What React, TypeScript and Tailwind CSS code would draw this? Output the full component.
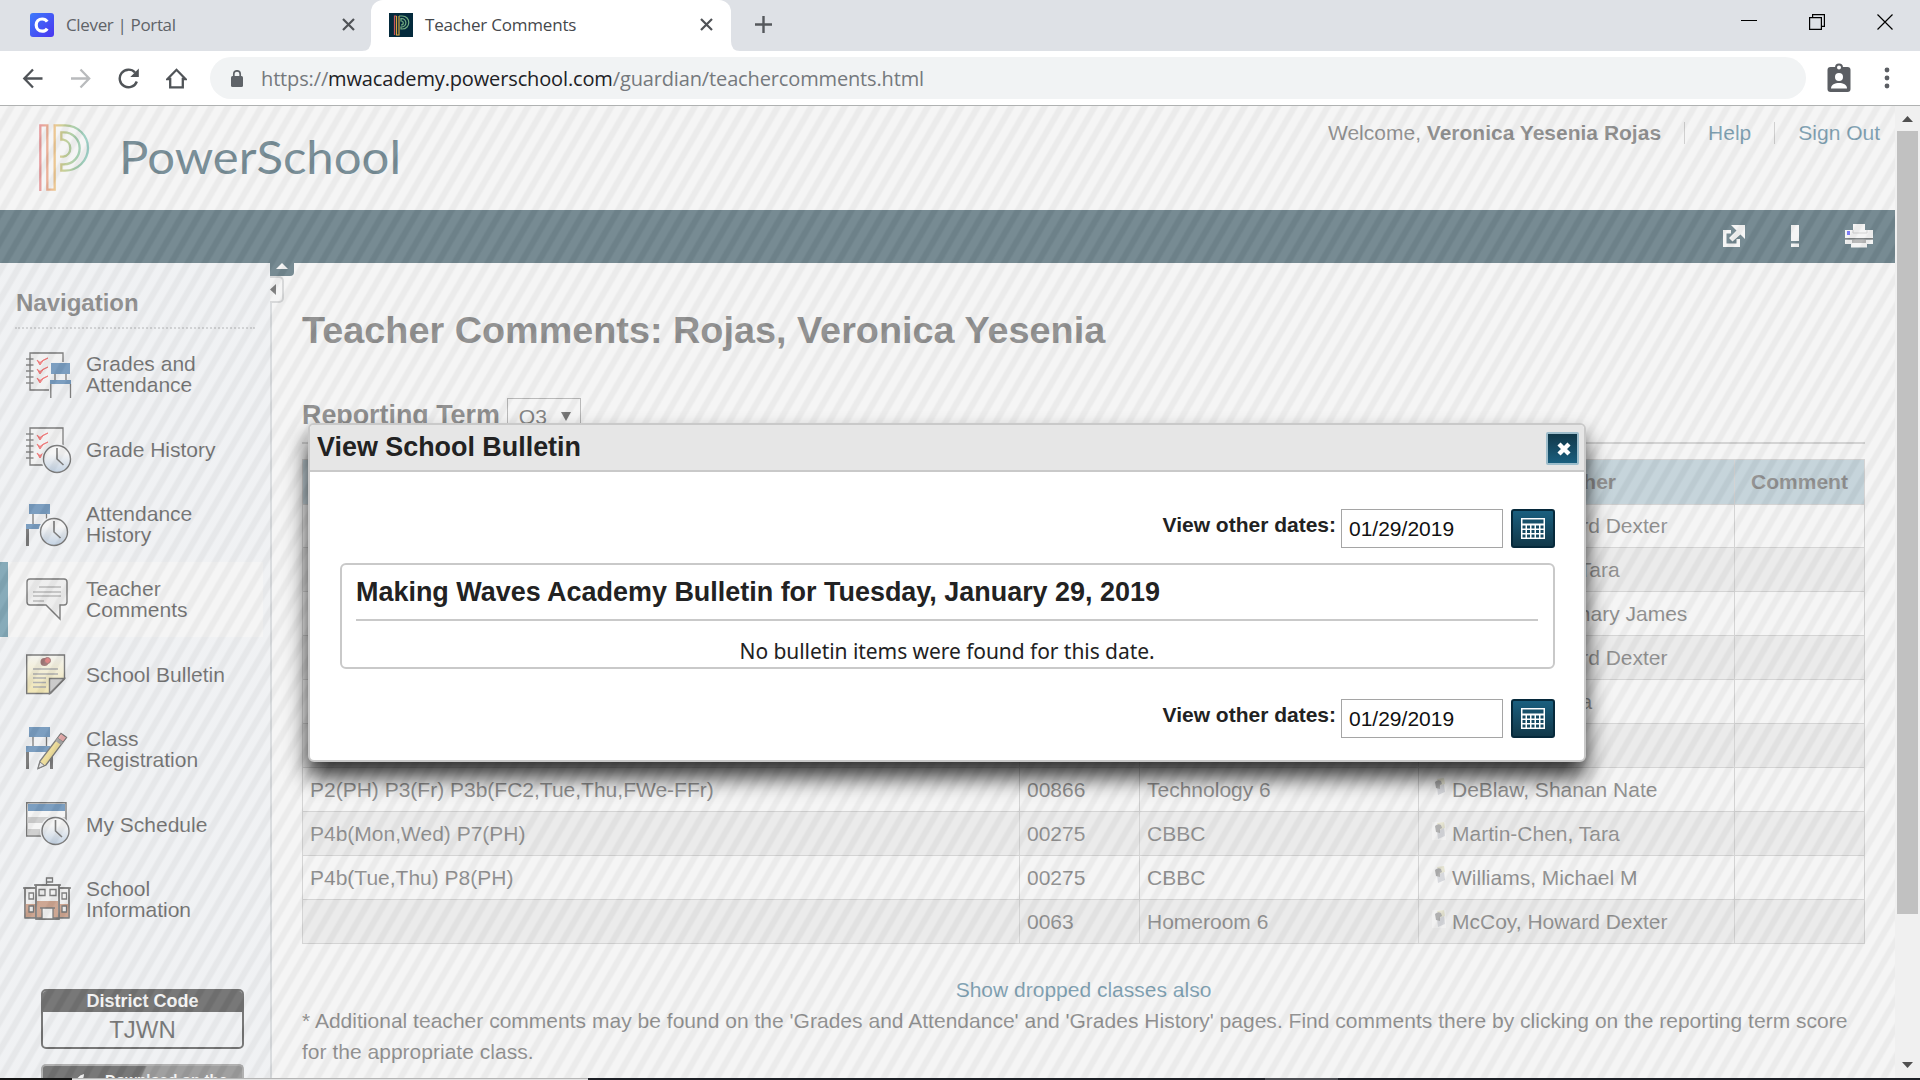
import React from "react";

const ARIAL = "font-['Liberation_Sans',Arial,sans-serif]";
const SEGOE = "font-['Open_Sans','Noto_Sans',sans-serif]";

function TabStrip() {
  return (
    <div className={`${SEGOE} flex h-[51px] bg-[#dee1e6] text-[17px] tracking-[-0.2px]`}>
      <div className="flex w-[371px] items-center pl-[30px] pr-[16px] pb-[2px]">
        <svg width="24" height="24" viewBox="0 0 24 24">
          <defs>
            <linearGradient id="cl" x1="0" y1="0" x2="1" y2="1">
              <stop offset="0" stopColor="#3d7bfb" />
              <stop offset="1" stopColor="#4a35f0" />
            </linearGradient>
          </defs>
          <rect width="24" height="24" rx="3" fill="url(#cl)" />
          <path d="M17.2 8.6C16.2 7 14.4 6 12.2 6c-3.500 0-6 2.500-6 6.100s2.500 6.100 6 6.100c2.200 0 4-1 5-2.600" fill="none" stroke="#fff" strokeWidth="3.200" />
        </svg>
        <span className="ml-3 flex-1 whitespace-nowrap tracking-[-0.35px] text-[#5f6368]">Clever | Portal</span>
        <CloseX />
      </div>
      <div className="relative flex w-[360px] items-center rounded-t-[12px] bg-white pl-[18px] pr-[18px] pb-[2px]">
        <svg className="absolute -left-[9px] bottom-0" width="9" height="10" viewBox="0 0 9 10"><path d="M9 0V10H0Q9 10 9 0z" fill="#fff" /></svg>
        <svg className="absolute -right-[9px] bottom-0" width="9" height="10" viewBox="0 0 9 10"><path d="M0 0V10H9Q0 10 0 0z" fill="#fff" /></svg>
        <svg width="24" height="24" viewBox="0 0 24 24">
          <rect width="24" height="24" fill="#042a3c" />
          <path d="M5.500 22V3H7.500" fill="none" stroke="#c9565b" strokeWidth="1.200" />
          <path d="M7.500 3V22H10V3" fill="none" stroke="#d9a441" strokeWidth="1.200" />
          <path d="M10 3H13C22 3 22 16 13 16H12V14C19 14 18 5 12 5.500V8C15 8 15 12 12 12" fill="none" stroke="#73ad82" strokeWidth="1.200" />
        </svg>
        <span className="ml-3 flex-1 whitespace-nowrap text-[#45484c]">Teacher Comments</span>
        <CloseX />
      </div>
      <div className="flex flex-1 items-center pl-[24px] pb-[2px]">
        <svg width="17" height="17" viewBox="0 0 17 17">
          <path d="M8.500 0V17M0 8.500H17" stroke="#55585c" strokeWidth="2.400" />
        </svg>
      </div>
      <div className="flex h-[43px] items-center gap-[52px] pr-[27px]">
        <svg width="16" height="16" viewBox="0 0 16 16"><path d="M0 6.500H16" stroke="#000" strokeWidth="1" /></svg>
        <svg width="16" height="16" viewBox="0 0 16 16" fill="none" stroke="#000" strokeWidth="1.200">
          <path d="M.6 3.600H12.400V15.400H.6zM3.600 3.600V.6H15.400V12.400H12.400" />
        </svg>
        <svg width="16" height="16" viewBox="0 0 16 16"><path d="M.5.5L15.500 15.500M15.500.5L.5 15.500" stroke="#000" strokeWidth="1.200" /></svg>
      </div>
    </div>
  );
}

function CloseX() {
  return (
    <svg width="13" height="13" viewBox="0 0 13 13">
      <path d="M1 1L12 12M12 1L1 12" stroke="#505357" strokeWidth="2.200" />
    </svg>
  );
}

function Toolbar() {
  return (
    <div className={`${SEGOE} flex h-[55px] items-center border-b border-[#b0b2b2] bg-white pl-[22px]`}>
      <div className="flex items-center gap-[27px]">
        <svg width="21" height="21" viewBox="0 0 21 21" fill="none" stroke="#505458" strokeWidth="2.300"><path d="M20.500 10.500H3M11 1.500L2.300 10.500L11 19.500" /></svg>
        <svg width="21" height="21" viewBox="0 0 21 21" fill="none" stroke="#b9bbbd" strokeWidth="2.300"><path d="M1 10.500H19M10.500 1.500L19.200 10.500L10.500 19.500" /></svg>
        <svg width="21" height="21" viewBox="0 0 21 21">
          <path d="M18.800 13.500A8.800 8.800 0 1 1 17 4.500" fill="none" stroke="#505458" strokeWidth="2.400" />
          <path d="M20.800 0.500V9H12.300z" fill="#505458" />
        </svg>
        <svg width="21" height="21" viewBox="0 0 21 21" fill="none" stroke="#505458" strokeWidth="2.300"><path d="M1.500 11L10.500 1.800L19.500 11H16.800V19.300H4.200V11z" /></svg>
      </div>
      <div className="ml-[23px] flex h-[42px] w-[1596px] items-center rounded-full bg-[#f1f3f4] pl-[21px]">
        <svg width="12" height="17" viewBox="0 0 12 17">
          <rect y="6" width="12" height="11" rx="1.500" fill="#5f6368" />
          <path d="M2.800 7V4a3.200 3.200 0 0 1 6.400 0V7" fill="none" stroke="#5f6368" strokeWidth="1.700" />
        </svg>
        <span className="ml-[18px] whitespace-nowrap pt-px text-[20px] tracking-[-0.14px] text-[#75797d]">
          https://<span className="text-[#202124]">mwacademy.powerschool.com</span>/guardian/teachercomments.html
        </span>
      </div>
      <svg className="ml-[21px]" width="24" height="30" viewBox="0 0 24 30">
        <rect x="0.500" y="4" width="23" height="25" rx="3" fill="#5b5e63" />
        <circle cx="12" cy="4.500" r="3" fill="#fff" stroke="#5b5e63" strokeWidth="2" />
        <circle cx="12" cy="14" r="4" fill="#fff" />
        <path d="M4 25.500c0-4 4-5.500 8-5.500s8 1.500 8 5.500z" fill="#fff" />
      </svg>
      <svg className="ml-[33px]" width="6" height="22" viewBox="0 0 6 22" fill="#5b5e63">
        <circle cx="3" cy="3" r="2.400" /><circle cx="3" cy="11" r="2.400" /><circle cx="3" cy="19" r="2.400" />
      </svg>
    </div>
  );
}

function Header() {
  return (
    <div className="flex h-[104px] justify-between bg-white">
      <svg width="420" height="104" viewBox="0 0 420 104">
        <linearGradient id="pg" x1="57" y1="0" x2="208" y2="0" gradientUnits="userSpaceOnUse">
          <stop offset="0" stopColor="#e04a55" /><stop offset=".17" stopColor="#ec7a48" />
          <stop offset=".32" stopColor="#eda63a" /><stop offset=".48" stopColor="#a8b545" />
          <stop offset=".75" stopColor="#62b276" /><stop offset="1" stopColor="#52b7ae" />
        </linearGradient>
        <path
          transform="translate(20 -2) scale(.3333)"
          d="M61 261V64H82V257H104V64H135A69 68 0 0 1 135 200H124V181H132A47 48 0 0 0 132 85H124V107H130A26 26 0 0 1 130 158H120"
          fill="none" stroke="url(#pg)" strokeWidth="7"
        />
        <text x="119" y="67.500" textLength="282" lengthAdjust="spacingAndGlyphs" fontFamily="Lato, sans-serif" fontSize="46" fill="#0b3648">PowerSchool</text>
      </svg>
      <div className="flex h-[54px] items-center pr-[15px] text-[21px] text-[#3c3c3c]">
        <span>Welcome, <b>Veronica Yesenia Rojas</b></span>
        <span className="ml-[23px] mr-[23px] h-[22px] w-px bg-[#b5b5b5]" />
        <span className="text-[#195d7f]">Help</span>
        <span className="ml-[23px] mr-[23px] h-[22px] w-px bg-[#b5b5b5]" />
        <span className="text-[#195d7f]">Sign Out</span>
      </div>
    </div>
  );
}

function DarkBar() {
  return (
    <div className="flex h-[53px] items-center justify-end gap-[46px] bg-[#032b3b] pb-[2px] pr-[22px]">
      <svg width="22" height="22" viewBox="0 0 22 22" fill="#fff">
        <path d="M8 5H0V22H17V14H13.500V18.500H3.500V8.500H8z" />
        <path d="M8 0H22V14L17.500 9.500L9.500 16.500L6 13L13.500 5.500z" />
      </svg>
      <svg width="8" height="22" viewBox="0 0 8 22" fill="#fff"><path d="M0 0H8V16H0zM0 18.500H8V22H0z" /></svg>
      <svg width="28" height="24" viewBox="0 0 28 24">
        <path d="M8 0H20V6H28V14H0V6H8z" fill="#fff" />
        <path d="M8 6V9H22V6" fill="none" stroke="#bbb" />
        <rect x="2" y="7" width="3" height="4" fill="#1010ff" />
        <path d="M0 15.500H28V20H22V23.500H6V20H0z" fill="#fff" />
        <path d="M7 15.500H21V19H7z" fill="#888" /><path d="M0 14.800H28" stroke="#222" strokeWidth="1.200" />
      </svg>
    </div>
  );
}

const INK = "#111";
const Clock = ({ x, y }: { x: number; y: number }) => (
  <g transform={`translate(${x} ${y})`}>
    <circle r="15.500" fill="#f5f8fc" />
    <circle r="13.500" fill="url(#clk)" stroke={INK} strokeWidth="1.400" />
    <path d="M0-11V0L6.500 6" fill="none" stroke={INK} strokeWidth="1.600" />
  </g>
);
const Notebook = () => (
  <g>
    <path d="M4 1H37V38H4z" fill="#f8f8f8" stroke={INK} strokeWidth="1.300" />
    {[7, 13, 19, 25, 31].map((y) => <path key={y} d={`M0 ${y}H7.500`} stroke={INK} strokeWidth="1.300" />)}
    {[8, 17, 26].map((y) => <path key={y} d={`M11 ${y}l3 5q2-5 8-7q-5 1.500-8 4.500z`} fill="#f01010" stroke="#f01010" />)}
  </g>
);

const icons: Record<string, React.ReactNode> = {
  grades: (
    <>
      <Notebook />
      <path d="M23 10H46V28H48V48H23z" fill="#f2f5f9" />
      <path d="M25 11H44V22H25z" fill="#0d5296" />
      <path d="M24 28H45V32H24z" fill="#0d5296" />
      <path d="M29 22V28M40 22V28M24.800 32V46M44.500 32V46" stroke={INK} strokeWidth="1.300" />
    </>
  ),
  history: (<><Notebook /><Clock x={31} y={32} /></>),
  attendance: (
    <>
      <path d="M3 2H24V12H3zM0 22H20V27H0z" fill="#0d5296" />
      <path d="M7 12V22M20.500 12V22" stroke={INK} strokeWidth="1.300" /><path d="M0 27H3V44H0z" fill={INK} />
      <Clock x={28} y={30} />
    </>
  ),
  comments: (
    <>
      <path d="M4 2H38Q41 2 41 5V25Q41 28 38 28H34V42L20 28H4Q1 28 1 25V5Q1 2 4 2z" fill="#f2f2f2" stroke={INK} strokeWidth="1.400" />
      <path d="M13 10H35M7 15H35M7 19H35M7 24H18" stroke="#888" strokeWidth="1.300" />
    </>
  ),
  bulletin: (
    <>
      <path d="M.7 3H38.500V27L24.500 41.500H.7z" fill="url(#note)" stroke={INK} strokeWidth="1.400" />
      <path d="M38.500 26.500H23.500V41.500z" fill="#aaa" stroke={INK} strokeWidth="1.400" />
      <path d="M7 17H32M7 22H32M7 26H20M7 30.500H20M7 35H20" stroke="#777" strokeWidth="1.300" />
      <circle cx="18.500" cy="10" r="4" fill="#5a0f0f" /><circle cx="21.500" cy="8.500" r="3" fill="#d02020" stroke="#5a0f0f" />
    </>
  ),
  registration: (
    <>
      <path d="M3 0H24V10H3zM0 19H24V25H0z" fill="#0d5296" />
      <path d="M7 10V19M20.500 10V19" stroke={INK} strokeWidth="1.300" /><path d="M0 25H3V42H0zM24 25H27V42H24z" fill={INK} />
      <path d="M12 41.500L14 34L35 6.500L40.500 10.500L20 38z" fill="#f0d050" stroke={INK} strokeWidth="1.300" />
      <path d="M35 6.500L40.500 10.500L37 15L31.500 11z" fill="#e07070" stroke={INK} strokeWidth="1" />
      <path d="M30.500 12.500L36 16.500" stroke="#666" strokeWidth="3.500" /><path d="M12 41.500L14 35L18.500 38.500z" fill="#ddd" stroke={INK} />
    </>
  ),
  schedule: (
    <>
      <path d="M.7 .7H40V34H.7z" fill="#fff" stroke={INK} strokeWidth="1.400" />
      <path d="M2 2H39V9H2z" fill="#0d5296" />
      <path d="M2 15H39V21H2zM2 27H39V33H2z" fill="#b5b5b5" />
      <Clock x={29.500} y={29} />
    </>
  ),
  school: (
    <g stroke={INK} strokeWidth="1.300">
      <path d="M-1 11H11V40H-1zM33 11H43V40H33z" fill="#f2f2f2" />
      <path d="M-1 27H43V40H-1z" fill="#b0633c" stroke="none" />
      <path d="M10 8H33V42H10z" fill="#f4f4f4" /><path d="M11 24H32V41H11z" fill="#b0633c" stroke="none" />
      <path d="M-1 11V41H43V11M-3 11H9M33 11H45M8 8H35M10 8V42H33V8M20.500 8V1H26.500V5H20.500" fill="none" />
      <path d="M3 16H7.500V22H3zM3 29H7.500V35H3zM36 16H40.500V22H36zM36 29H40.500V35H36zM13 12.500H19V18.500H13zM24 12.500H30V18.500H24zM16 31H27V42H16zM14 31H29" fill="#f8f8f8" />
    </g>
  ),
};

const nav = [
  { icon: "grades", lines: ["Grades and", "Attendance"] },
  { icon: "history", lines: ["Grade History"] },
  { icon: "attendance", lines: ["Attendance", "History"] },
  { icon: "comments", lines: ["Teacher", "Comments"], active: true },
  { icon: "bulletin", lines: ["School Bulletin"] },
  { icon: "registration", lines: ["Class", "Registration"] },
  { icon: "schedule", lines: ["My Schedule"] },
  { icon: "school", lines: ["School", "Information"] },
];

function Sidebar() {
  return (
    <div className="relative w-[272px] shrink-0 border-r-2 border-[#c8cdd2] bg-[#f5f8fc]">
      <svg width="0" height="0" className="absolute">
        <defs>
          <linearGradient id="clk" x1="0" y1="0" x2="0" y2="1"><stop offset=".3" stopColor="#fff" /><stop offset="1" stopColor="#9dbbdc" /></linearGradient>
          <linearGradient id="note" x1="0" y1="0" x2="0" y2="1"><stop offset="0" stopColor="#fdfdf4" /><stop offset="1" stopColor="#f6df7c" /></linearGradient>
        </defs>
      </svg>
      <div className="ml-[15px] mr-[15px] h-[66px] border-b-2 border-dotted border-[#b9bcc0] pl-px pt-[24px] text-[24px] font-bold leading-8 text-[#3c3c3c]">
        Navigation
      </div>
      <div className="pt-2">
        {nav.map((n) => (
          <div key={n.icon} className={n.active ? "mr-[7px] flex h-[75px] items-center border-l-8 border-[#236b88] bg-white pl-[18px]" : "flex h-[75px] items-center pl-[26px]"}>
            <svg width="46" height="46" viewBox="0 0 46 46" className="mt-px shrink-0 overflow-visible">{icons[n.icon]}</svg>
            <div className="ml-[14px] whitespace-nowrap pb-px text-[21px] leading-[21px] text-[#050505]">
              {n.lines.map((l) => <div key={l}>{l}</div>)}
            </div>
          </div>
        ))}
      </div>
      <div className="ml-[41px] mt-[52px] h-[60px] w-[203px] overflow-hidden rounded-[5px] border-2 border-[#050505] text-center">
        <div className="h-[21px] bg-[#050505] text-[18px] font-bold leading-[20px] text-white">District Code</div>
        <div className="text-[24px] leading-[36px] text-[#111]">TJWN</div>
      </div>
      <div className="ml-[41px] mt-[15px] flex h-[14px] w-[203px] overflow-hidden rounded-t-[5px] border-2 border-b-0 border-[#777] bg-linear-[115deg,#050505_50%,#555_51%] pl-[30px] pt-[6px]">
        <svg className="mt-[2px] shrink-0" width="14" height="8" viewBox="0 0 14 8"><path d="M3 8Q4 2 11 0Q11 6 6 8z" fill="#fff" /></svg>
        <div className="ml-[18px] whitespace-nowrap text-[15px] font-bold leading-4 tracking-[0.1px] text-white">Download on the</div>
      </div>
      <div className="absolute left-[270px] top-0 flex h-[13px] w-[24px] justify-center rounded-br-[4px] bg-[#032b3b]">
        <svg width="12" height="6" viewBox="0 0 12 6"><path d="M6 0L12 6H0z" fill="#fff" /></svg>
      </div>
      <div className="absolute left-[270px] top-[13px] flex h-[27px] w-[14px] items-center rounded-r-[5px] border-2 border-l-0 border-[#c4c6c8] bg-white">
        <svg width="7" height="11" viewBox="0 0 7 11"><path d="M0 5.500L6 0V11z" fill="#222" /></svg>
      </div>
    </div>
  );
}

const rows = [
  ["", "", "", "McCoy, Howard Dexter"],
  ["", "", "", "Martin-Chen, Tara"],
  ["", "", "", "Connolly, Zachary James"],
  ["", "", "", "McCoy, Howard Dexter"],
  ["", "", "", "Cohen, Andrea"],
  ["", "", "", ""],
  ["P2(PH) P3(Fr) P3b(FC2,Tue,Thu,FWe-FFr)", "00866", "Technology 6", "DeBlaw, Shanan Nate"],
  ["P4b(Mon,Wed) P7(PH)", "00275", "CBBC", "Martin-Chen, Tara"],
  ["P4b(Tue,Thu) P8(PH)", "00275", "CBBC", "Williams, Michael M"],
  ["", "0063", "Homeroom 6", "McCoy, Howard Dexter"],
];

const GRID = "grid grid-cols-[717px_120px_279px_316px_130px]";

function PersonIcon() {
  return (
    <svg className="mr-[6px] mt-[-8px] inline-block" width="14" height="18" viewBox="0 0 14 18">
      <rect width="14" height="18" fill="#fff" fillOpacity=".6" />
      <path d="M5 1l7-1 1 6-5 2z" fill="#e0ddb8" />
      <path d="M5 9l7-3 1 8-7 3z" fill="#c3c6ce" />
      <path d="M3 4q3-3 6-1l1 3-2 1v4l-4-1z" fill="#777" />
    </svg>
  );
}

function Main() {
  return (
    <div className="w-[1593px] shrink-0 bg-white pl-[30px] text-[#3c3c3c]">
      <h1 className="whitespace-nowrap pt-[44px] text-[37.8px] font-bold leading-[46px]">Teacher Comments: Rojas, Veronica Yesenia</h1>
      <div className="mt-[45px] flex h-[46px] w-[1563px] items-start border-b-2 border-[#bbb] text-[26.850px] font-bold leading-[34px]">
        <span className="whitespace-nowrap">Reporting Term</span>
        <div className="ml-[7px] flex h-[36px] w-[74px] items-center justify-between border border-[#888] pl-[11px] pr-[9px] pt-px text-[21px] font-normal text-[#222]">
          Q3
          <svg width="10" height="9" viewBox="0 0 10 9"><path d="M0 0H10L5 9z" fill="#111" /></svg>
        </div>
      </div>
      <div className="mt-[15px] w-[1563px] border-l border-t border-[#bdbdbd] text-[21px]">
        <div className={`${GRID} h-[44px] bg-[#a1becb] text-center font-bold leading-[44px]`}>
          {["", "", "", "Teacher", "Comment"].map((h, i) => (
            <div key={i} className="border-b border-r border-[#bdbdbd]">{h}</div>
          ))}
        </div>
        {rows.map((r, i) => (
          <div key={i} className={i % 2 ? `${GRID} h-[44px] bg-[#ebebeb]` : `${GRID} h-[44px]`}>
            {[...r, ""].map((c, j) => (
              <div key={j} className={j === 3 ? "h-[44px] whitespace-nowrap border-b border-r border-[#bdbdbd] pl-[13px] leading-[44px]" : "h-[44px] whitespace-nowrap border-b border-r border-[#bdbdbd] pl-[7px] leading-[44px]"}>
                {j === 3 && c && <PersonIcon />}{c}
              </div>
            ))}
          </div>
        ))}
      </div>
      <div className="mt-[30px] w-[1563px] text-center text-[21px] leading-[31px] text-[#195d7f]">Show dropped classes also</div>
      <div className="whitespace-nowrap text-[21px] leading-[31px] tracking-[0.016px]">
        * Additional teacher comments may be found on the 'Grades and Attendance' and 'Grades History' pages. Find comments there by clicking on the reporting term score<br />for the appropriate class.
      </div>
    </div>
  );
}

function DateRow() {
  return (
    <div className="flex h-[39px] justify-end pr-[29px]">
      <b className="mr-[5px] whitespace-nowrap pt-[4px] text-[21px] leading-6">View other dates:</b>
      <div className="mr-2 w-[162px] border border-[#a5a5a5] pl-[7px] text-[21px] leading-[38px] text-[#111]">01/29/2019</div>
      <div className="flex w-[44px] items-center justify-center rounded-[3px] border-2 border-[#06293b] bg-linear-to-b from-[#1a5f7f] to-[#113849]">
        <svg width="24" height="21" viewBox="0 0 24 21">
          <path d="M0 0H24V21H0z" fill="#fff" /><path d="M1.500 1.500H22.500V5.500H1.500z" fill="#174f69" />
          {[7.5, 12, 16.5].map((y) => [1.5, 6, 10.5, 15, 19.5].map((x) => <rect key={`${x}-${y}`} x={x} y={y} width="3" height="3" fill="#164a62" />))}
        </svg>
      </div>
    </div>
  );
}

function Dialog() {
  return (
    <div className="absolute left-[308px] top-[317px] h-[339px] w-[1278px] rounded-[6px] border-2 border-[#c9c9c9] bg-white text-[#222] shadow-[0_15px_22px_rgba(0,0,0,0.8)]">
      <div className="flex h-[47px] justify-between rounded-t-[4px] border-b-2 border-[#c9c9c9] bg-[#e6e6e6] pl-[7px] pr-[5px]">
        <b className="text-[26.9px] leading-[44px]">View School Bulletin</b>
        <div className="mt-[7px] flex h-[33px] w-[33px] items-center justify-center rounded-[2px] border-2 border-[#9dbdcb] bg-linear-to-b from-[#113849] to-[#1a5f7f]">
          <svg className="ml-[2px]" width="14" height="14" viewBox="0 0 14 14"><path d="M2 2L12 12M12 2L2 12" stroke="#fff" strokeWidth="4.400" /></svg>
        </div>
      </div>
      <div className="pt-[37px]"><DateRow /></div>
      <div className="ml-[30px] mt-[15px] h-[106px] w-[1215px] rounded-[6px] border-2 border-[#c9c9c9] pl-[14px] pr-[15px]">
        <div className="h-[56px] border-b-2 border-[#c9c9c9] text-[26.940px] font-bold leading-[54px]">Making Waves Academy Bulletin for Tuesday, January 29, 2019</div>
        <div className="pt-[16px] text-center font-['Noto_Sans','Open_Sans',sans-serif] text-[21px] leading-[28px] tracking-[-0.06px]">No bulletin items were found for this date.</div>
      </div>
      <div className="pt-[30px]"><DateRow /></div>
    </div>
  );
}

export default function App() {
  return (
    <div className={`${ARIAL} flex h-[1080px] w-[1920px] flex-col overflow-hidden bg-white`}>
      <TabStrip />
      <Toolbar />
      <div className="relative flex h-[972px] overflow-hidden">
        <div className="relative flex w-[1895px] flex-col overflow-hidden">
          <Header />
          <DarkBar />
          <div className="flex h-[815px]">
            <Sidebar />
            <Main />
          </div>
          <div className="absolute inset-0 bg-[repeating-linear-gradient(120deg,#ebebeb_0px,#ebebeb_6.2px,#d7d7d7_8.200px,#d7d7d7_12.400px,#ebebeb_14.430px)] opacity-50" />
        </div>
        <div className="flex w-[25px] flex-col items-center justify-between bg-[#f0f0f0] pb-[10px] pt-[10px]">
          <svg width="11" height="6" viewBox="0 0 11 6"><path d="M5.500 0L11 6H0z" fill="#505050" /></svg>
          <div className="mb-auto mt-[9px] h-[783px] w-[21px] bg-[#c1c1c1]" />
          <svg width="11" height="6" viewBox="0 0 11 6"><path d="M0 0H11L5.500 6z" fill="#505050" /></svg>
        </div>
        <Dialog />
      </div>
      <div className="flex h-[2px]">
        <div className="w-[72px] bg-[#151515]" />
        <div className="w-[516px] border-t border-[#b5b5b5] bg-[#e4e4e4]" />
        <div className="w-[677px] bg-[#1d2026]" />
        <div className="w-[73px] bg-[#4b4d52]" />
        <div className="flex-1 bg-[#1d2026]" />
      </div>
    </div>
  );
}
